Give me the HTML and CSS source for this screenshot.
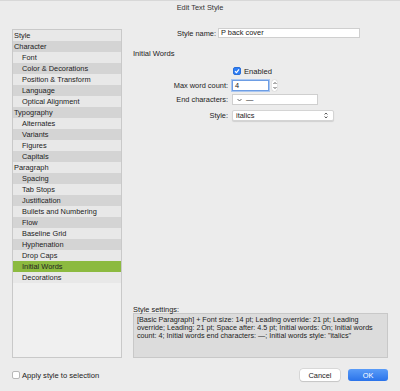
FILE: index.html
```html
<!DOCTYPE html>
<html lang="en">
<head>
    <meta charset="UTF-8">
    <meta name="viewport" content="width=device-width, initial-scale=1.0">
    <title>Edit Text Style</title>
    <link rel="stylesheet" href="styles.css">
</head>
<body>
    <div class="dialog">
        <div class="title">Edit Text Style</div>

        <div class="main">
            <div class="list">
                <div class="row head">Style</div>
                <div class="row head alt">Character</div>
                <div class="row">Font</div>
                <div class="row alt">Color &amp; Decorations</div>
                <div class="row">Position &amp; Transform</div>
                <div class="row alt">Language</div>
                <div class="row">Optical Alignment</div>
                <div class="row head alt">Typography</div>
                <div class="row">Alternates</div>
                <div class="row alt">Variants</div>
                <div class="row">Figures</div>
                <div class="row alt">Capitals</div>
                <div class="row head">Paragraph</div>
                <div class="row alt">Spacing</div>
                <div class="row">Tab Stops</div>
                <div class="row alt">Justification</div>
                <div class="row">Bullets and Numbering</div>
                <div class="row alt">Flow</div>
                <div class="row">Baseline Grid</div>
                <div class="row alt">Hyphenation</div>
                <div class="row">Drop Caps</div>
                <div class="row selected">Initial Words</div>
                <div class="row">Decorations</div>
            </div>

            <div class="pane">
                <div class="name-row">
                    <label class="name-label">Style name:</label>
                    <div class="field name-field">P back cover</div>
                </div>

                <div class="section">Initial Words</div>

                <div class="check-row">
                    <span class="check on">
                        <svg width="6" height="6" viewBox="0 0 6 6"><path d="M1 3.2 L2.5 4.6 L5 1.3" fill="none" stroke="#fff" stroke-width="1.2"/></svg>
                    </span>
                    <span>Enabled</span>
                </div>

                <div class="field-row">
                    <label class="field-label">Max word count:</label>
                    <div class="field count-field focus">4</div>
                    <div class="stepper">
                        <svg width="4" height="9" viewBox="0 0 4 9"><path d="M0.5 3 L2 1.5 L3.5 3 M0.5 6 L2 7.5 L3.5 6" fill="none" stroke="#333" stroke-width="0.8"/></svg>
                    </div>
                </div>

                <div class="field-row end-row">
                    <label class="field-label">End characters:</label>
                    <div class="field end-field">
                        <svg width="5" height="4" viewBox="0 0 5 4"><path d="M0.5 1 L2.5 3 L4.5 1" fill="none" stroke="#444" stroke-width="0.8"/></svg>
                        <span>—</span>
                    </div>
                </div>

                <div class="field-row style-row">
                    <label class="field-label">Style:</label>
                    <div class="field select-field">
                        <span>italics</span>
                        <svg width="4" height="7" viewBox="0 0 4 7"><path d="M0.6 2.5 L2 1 L3.4 2.5 M0.6 4.5 L2 6 L3.4 4.5" fill="none" stroke="#333" stroke-width="0.8"/></svg>
                    </div>
                </div>

                <div class="settings">
                    <div class="settings-label">Style settings:</div>
                    <div class="settings-box">[Basic Paragraph] + Font size: 14 pt; Leading override: 21 pt; Leading override; Leading: 21 pt; Space after: 4.5 pt; Initial words: On; Initial words count: 4; Initial words end characters: —; Initial words style: "italics"</div>
                </div>
            </div>
        </div>

        <div class="footer">
            <div class="apply">
                <span class="check"></span>
                <span>Apply style to selection</span>
            </div>
            <div class="buttons">
                <button class="btn cancel">Cancel</button>
                <button class="btn ok">OK</button>
            </div>
        </div>
    </div>
</body>
</html>
```

FILE: styles.css
```css
body {
    margin: 0;
    padding: 0;
    background-color: #ececec;
    font-family: "Liberation Sans", Arial, sans-serif;
    font-size: 7.4px;
    color: #222;
}
.dialog {
    width: 400px;
    height: 391px;
    display: flex;
    flex-direction: column;
    box-sizing: border-box;
    border-top: 1px solid #d8d8d8;
}
.title {
    height: 13px;
    line-height: 13px;
    text-align: center;
    color: #333;
}
.main {
    display: flex;
    margin-top: 15px;
    padding: 0 12px;
    gap: 11px;
}
.list {
    width: 110px;
    height: 329px;
    box-sizing: border-box;
    border: 1px solid #c9c9c9;
    background-color: #f0f0f0;
}
.row {
    height: 11px;
    line-height: 11px;
    padding-left: 9px;
    background-color: #e8e8e8;
    white-space: nowrap;
}
.row.alt {
    background-color: #d4d4d4;
}
.row.head {
    padding-left: 1px;
}
.row.selected {
    background-color: #8cba40;
}
.pane {
    flex: 1;
    display: flex;
    flex-direction: column;
    height: 330px;
    margin-top: -1px;
}
.name-row, .field-row, .check-row {
    display: flex;
    align-items: center;
}
.name-row {
    height: 10px;
}
.name-label {
    width: 83px;
    text-align: right;
    margin-right: 2px;
}
.field {
    box-sizing: border-box;
    height: 10px;
    line-height: 8px;
    background: #fff;
    border: 1px solid #cfcfcf;
    padding-left: 2px;
}
.name-field {
    width: 142px;
}
.section {
    margin-top: 10px;
    height: 11px;
    line-height: 11px;
    font-size: 7.6px;
}
.check-row {
    margin-top: 7px;
    height: 10px;
    padding-left: 100px;
    gap: 3px;
    font-size: 7.6px;
}
.check {
    width: 8px;
    height: 8px;
    box-sizing: border-box;
    border-radius: 2px;
    border: 1px solid #b8b8b8;
    background: #fff;
    display: flex;
    align-items: center;
    justify-content: center;
}
.check.on {
    background: #2f7ef5;
    border-color: #2a6fd8;
}
.field-row {
    margin-top: 4px;
    height: 11px;
}
.field-label {
    width: 95px;
    text-align: right;
    margin-right: 4px;
}
.count-field {
    width: 37px;
    height: 11px;
    line-height: 9px;
}
.focus {
    border-color: #6d9de4;
    box-shadow: 0 0 0 1px #a9c6f0;
}
.stepper {
    margin-left: 3px;
    width: 5px;
    height: 11px;
    display: flex;
    align-items: center;
    justify-content: center;
    background: #fff;
    border-radius: 2px;
    box-shadow: 0 0 1px #999;
}
.end-row {
    margin-top: 3px;
}
.end-field {
    width: 86px;
    height: 11px;
    display: flex;
    align-items: center;
    gap: 4px;
    padding-left: 4px;
}
.style-row {
    margin-top: 5px;
}
.select-field {
    width: 102px;
    height: 11px;
    display: flex;
    align-items: center;
    justify-content: space-between;
    padding: 0 5px 0 3px;
    border-radius: 2px;
    border-color: #d4d4d4;
    box-shadow: 0 1px 1px rgba(0, 0, 0, 0.12);
}
.settings {
    margin-top: auto;
}
.settings-label {
    height: 8px;
    line-height: 8px;
    margin-bottom: -1px;
}
.settings-box {
    height: 45px;
    box-sizing: border-box;
    width: 255px;
    background-color: #dcdcdc;
    border: 1px solid #c8c8c8;
    padding: 2px 3px;
    line-height: 8px;
    font-size: 7.2px;
    color: #222;
}
.footer {
    display: flex;
    align-items: center;
    justify-content: space-between;
    margin-top: 11px;
    padding: 0 12px;
    height: 12px;
}
.apply {
    display: flex;
    align-items: center;
    gap: 2px;
    font-size: 7.6px;
}
.buttons {
    display: flex;
    gap: 8px;
}
.btn {
    width: 40px;
    height: 12px;
    padding: 0;
    border: none;
    border-radius: 3px;
    font-family: "Liberation Sans", Arial, sans-serif;
    font-size: 7.4px;
}
.cancel {
    background: #fff;
    color: #222;
    box-shadow: 0 0 0 0.5px #c4c4c4, 0 1px 1px rgba(0, 0, 0, 0.15);
}
.ok {
    background: linear-gradient(#5a9cf8, #2a73ea);
    color: #fff;
}
```
